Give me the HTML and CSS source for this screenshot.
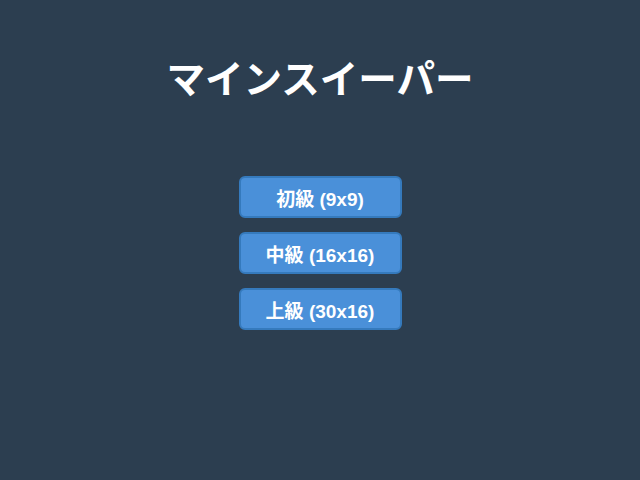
FILE: index.html
```html
<!DOCTYPE html>
<html lang="ja">
<head>
    <meta charset="UTF-8">
    <title>マインスイーパー</title>
    <link rel="stylesheet" href="styles.css">
</head>
<body>
<div class="menu">
    <h1>マインスイーパー</h1>
    <div class="levels">
        <button class="level-btn">初級 (9x9)</button>
        <button class="level-btn">中級 (16x16)</button>
        <button class="level-btn">上級 (30x16)</button>
    </div>
</div>
</body>
</html>
```

FILE: styles.css
```css
body {
    margin: 0;
    background-color: #2c3e50;
    color: white;
    font-family: "Liberation Sans", Arial, "Noto Sans CJK JP", sans-serif;
}
.menu {
    display: flex;
    flex-direction: column;
    align-items: center;
    padding-top: 57px;
}
h1 {
    margin: 0;
    font-size: 38.5px;
    line-height: 46px;
    font-weight: bold;
}
.levels {
    display: flex;
    flex-direction: column;
    gap: 14px;
    margin-top: 73px;
}
.level-btn {
    width: 163px;
    height: 42px;
    background-color: #4a90d9;
    border: 2px solid #357abd;
    border-radius: 6px;
    color: white;
    font-family: inherit;
    font-size: 19px;
    font-weight: bold;
    cursor: pointer;
}
.level-btn:hover {
    background-color: #357abd;
}
```
